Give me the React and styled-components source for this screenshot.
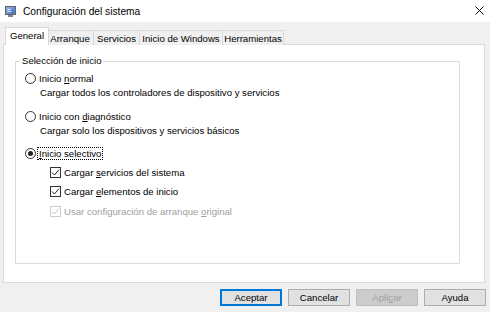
import React from 'react';
import styled, { createGlobalStyle } from 'styled-components';

const GlobalStyle = createGlobalStyle`
  html, body {
    margin: 0;
    padding: 0;
  }
  body {
    font-family: "Liberation Sans", Arial, sans-serif;
    font-size: 9.6px;
    color: #000;
  }
`;

const Window = styled.div`
  width: 490px;
  height: 312px;
  background: #f0f0f0;
  display: flex;
  flex-direction: column;
  overflow: hidden;
`;

const TitleBar = styled.div`
  height: 22px;
  flex-shrink: 0;
  background: #ffffff;
  display: flex;
  align-items: center;
  padding: 0 6px 0 5px;
`;

const Title = styled.span`
  flex: 1;
  margin-left: 7px;
  font-size: 10.2px;
`;

const CloseButton = styled.div`
  width: 9px;
  height: 9px;
  display: flex;
  margin-top: -2px;
`;

const Body = styled.div`
  flex: 1;
  display: flex;
  flex-direction: column;
  padding: 5px 5px 0 3px;
`;

const TabStrip = styled.div`
  display: flex;
  align-items: flex-end;
  height: 18px;
  padding-left: 4px;
  margin-bottom: -1px;
  position: relative;
  z-index: 1;
`;

const Tab = styled.div`
  width: ${p => p.width}px;
  height: ${p => (p.active ? 18 : 15)}px;
  box-sizing: border-box;
  border: 1px solid #d9d9d9;
  border-bottom: none;
  background: ${p => (p.active ? '#ffffff' : '#f0f0f0')};
  display: flex;
  align-items: center;
  justify-content: center;
  margin-left: ${p => (p.first ? -2 : -1)}px;
  margin-right: ${p => (p.active ? -2 : 0)}px;
  position: relative;
  z-index: ${p => (p.active ? 2 : 1)};
  white-space: nowrap;
  padding-bottom: ${p => (p.active ? 2 : 0)}px;
`;

const Panel = styled.div`
  width: 482px;
  height: 239px;
  box-sizing: border-box;
  background: #ffffff;
  border: 1px solid #d9d9d9;
  display: flex;
  flex-direction: column;
`;

const GroupBox = styled.fieldset`
  flex: 1;
  min-height: 0;
  margin: 9px 24px 18px 11px;
  padding: 3px 0 0 9px;
  border: 1px solid #dcdcdc;
  display: flex;
  flex-direction: column;
`;

const Legend = styled.legend`
  margin-left: -5px;
  padding: 0 2px;
  line-height: 14px;
`;

const Row = styled.div`
  display: flex;
  align-items: center;
  height: 14px;
  margin-top: ${p => p.top || 0}px;
  padding-left: ${p => p.indent || 0}px;
  color: ${p => (p.disabled ? '#a0a0a0' : '#000')};
  white-space: nowrap;
`;

const Radio = styled.span`
  width: 11px;
  height: 11px;
  box-sizing: border-box;
  border: 1px solid #333;
  border-radius: 50%;
  background: #fff;
  display: flex;
  align-items: center;
  justify-content: center;
  margin-right: 3px;
  flex-shrink: 0;

  &::after {
    content: '';
    display: ${p => (p.checked ? 'block' : 'none')};
    width: 5px;
    height: 5px;
    border-radius: 50%;
    background: #222;
  }
`;

const Check = styled.span`
  width: 11px;
  height: 11px;
  box-sizing: border-box;
  border: 1px solid ${p => (p.disabled ? '#cccccc' : '#333')};
  background: #fff;
  display: flex;
  align-items: center;
  justify-content: center;
  margin-right: 3px;
  flex-shrink: 0;
`;

const Focus = styled.span`
  outline: 1px dotted #000;
  outline-offset: 0;
  padding: 0 1px;
  margin-left: -1px;
  line-height: 11px;
`;

const Key = styled.u`
  text-decoration: underline;
  text-underline-offset: 1px;
`;

const ButtonRow = styled.div`
  display: flex;
  justify-content: flex-end;
  gap: 6px;
  margin-top: 6px;
  margin-right: -1px;
`;

const Button = styled.div`
  width: 62px;
  height: 17px;
  box-sizing: border-box;
  display: flex;
  align-items: center;
  justify-content: center;
  background: ${p => (p.disabled ? '#cccccc' : '#e1e1e1')};
  border: 1px solid ${p => (p.primary ? '#0078d7' : p.disabled ? '#bfbfbf' : '#adadad')};
  box-shadow: ${p => (p.primary ? 'inset 0 0 0 1px #0078d7' : 'none')};
  color: ${p => (p.disabled ? '#a0a0a0' : '#000')};
`;

const AppIcon = () => (
  <svg width="11" height="11" viewBox="0 0 11 11">
    <defs>
      <linearGradient id="scr" x1="0" y1="0" x2="1" y2="1">
        <stop offset="0" stopColor="#9cc3f5" />
        <stop offset="1" stopColor="#2f62c8" />
      </linearGradient>
    </defs>
    <rect x="0.5" y="0.5" width="10" height="8" fill="#8a94a6" stroke="#5c6473" />
    <rect x="1.5" y="1.5" width="8" height="6" fill="url(#scr)" />
    <rect x="3" y="9" width="5" height="2" fill="#7d8594" />
    <path d="M2.5 3.5h3M2.5 5.5h4" stroke="#ffffff" strokeWidth="0.8" />
  </svg>
);

const CheckMark = ({ color }) => (
  <svg width="9" height="9" viewBox="0 0 9 9">
    <path d="M1 4.5l2.4 2.5L8 1.6" fill="none" stroke={color} strokeWidth="1" />
  </svg>
);

const tabs = [
  { label: 'General', width: 44, active: true },
  { label: 'Arranque', width: 48 },
  { label: 'Servicios', width: 47 },
  { label: 'Inicio de Windows', width: 84 },
  { label: 'Herramientas', width: 62 },
];

export default function App() {
  return (
    <Window>
      <GlobalStyle />
      <TitleBar>
        <AppIcon />
        <Title>Configuración del sistema</Title>
        <CloseButton>
          <svg width="9" height="9" viewBox="0 0 9 9">
            <path d="M0.5 0.5l8 8M8.5 0.5l-8 8" stroke="#000" strokeWidth="1" />
          </svg>
        </CloseButton>
      </TitleBar>
      <Body>
        <TabStrip>
          {tabs.map((t, i) => (
            <Tab key={t.label} width={t.width} active={t.active} first={i === 0}>
              {t.label}
            </Tab>
          ))}
        </TabStrip>
        <Panel>
          <GroupBox>
            <Legend>Selección de inicio</Legend>
            <Row>
              <Radio />
              <span>Inicio <Key>n</Key>ormal</span>
            </Row>
            <Row indent={15}>Cargar todos los controladores de dispositivo y servicios</Row>
            <Row top={10}>
              <Radio />
              <span>Inicio con <Key>d</Key>iagnóstico</span>
            </Row>
            <Row indent={15}>Cargar solo los dispositivos y servicios básicos</Row>
            <Row top={9}>
              <Radio checked />
              <Focus><Key>I</Key>nicio selectivo</Focus>
            </Row>
            <Row top={5} indent={25}>
              <Check><CheckMark color="#222" /></Check>
              <span>Cargar <Key>s</Key>ervicios del sistema</span>
            </Row>
            <Row top={5} indent={25}>
              <Check><CheckMark color="#222" /></Check>
              <span>Cargar <Key>e</Key>lementos de inicio</span>
            </Row>
            <Row top={6} indent={25} disabled>
              <Check disabled><CheckMark color="#c4c4c4" /></Check>
              <span>Usar configuración de arranque <Key>o</Key>riginal</span>
            </Row>
          </GroupBox>
        </Panel>
        <ButtonRow>
          <Button primary>Aceptar</Button>
          <Button>Cancelar</Button>
          <Button disabled>Apli<Key>c</Key>ar</Button>
          <Button>Ayuda</Button>
        </ButtonRow>
      </Body>
    </Window>
  );
}
